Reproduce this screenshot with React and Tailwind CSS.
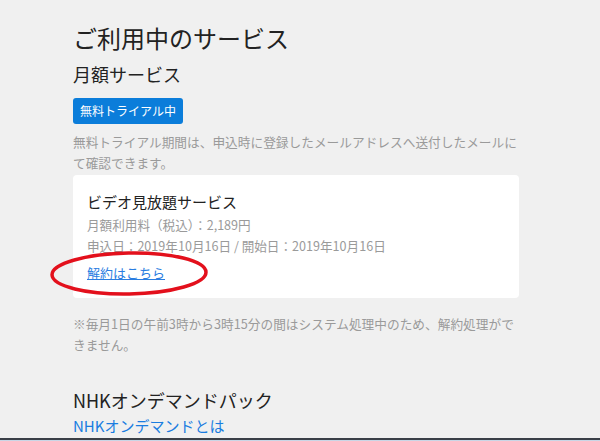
import React from 'react';

const font = { fontFamily: '"Noto Sans CJK JP", "Noto Sans", sans-serif' };

const App = () => {
  return (
    <div className="w-[600px] h-[441px] flex flex-col bg-[#f0f0f0] overflow-hidden" style={font}>
      <div className="flex-1 overflow-hidden pl-[73px] pt-[20px]">
        <div className="w-[450px]">
          <h1 className="text-[24px] leading-[36px] text-[#222]">ご利用中のサービス</h1>
          <h2 className="mt-[5px] text-[18px] leading-[27px] text-[#222]">月額サービス</h2>
          <span className="mt-[10px] inline-flex items-center h-[26px] px-[7px] rounded-[3px] bg-[#0b7dda] text-white text-[12px]">
            無料トライアル中
          </span>
          <p className="mt-[7px] text-[12.7px] leading-[21px] text-[#9a9a9a]">
            無料トライアル期間は、申込時に登録したメールアドレスへ送付したメールにて確認できます。
          </p>

          {/* Service card */}
          <div className="relative mt-[2px] w-[446px] bg-white rounded-[4px] pt-[16px] pb-[15px] pl-[14px]">
            <div className="text-[15px] leading-[22px] text-[#222]">ビデオ見放題サービス</div>
            <div className="mt-[1px] text-[12.6px] leading-[21px] text-[#9a9a9a]">月額利用料（税込）：2,189円</div>
            <div className="text-[12.6px] leading-[21px] text-[#9a9a9a]">申込日：2019年10月16日 / 開始日：2019年10月16日</div>
            <a href="#" className="block mt-[7px] w-fit text-[13px] leading-[20px] text-[#2a7de1] underline">
              解約はこちら
            </a>
            <svg className="absolute left-[-25px] top-[75px]" width="164" height="48" viewBox="0 0 164 48">
              <ellipse cx="81" cy="23.5" rx="77" ry="20.5" fill="none" stroke="#e3101c" strokeWidth="3.5" transform="rotate(-1 81 23.5)" />
            </svg>
          </div>

          <p className="mt-[15px] text-[12.7px] leading-[21px] text-[#9a9a9a]">
            ※毎月1日の午前3時から3時15分の間はシステム処理中のため、解約処理ができません。
          </p>

          <h2 className="mt-[32px] text-[18px] leading-[27px] text-[#222]">NHKオンデマンドパック</h2>
          <a href="#" className="block mt-[1px] text-[15px] leading-[22px] text-[#1a7de0]">NHKオンデマンドとは</a>
        </div>
      </div>
      <div className="h-[2px] bg-[#3a3f47]" />
      <div className="h-[1px] bg-[#c9d6e6]" />
    </div>
  );
};

export default App;
